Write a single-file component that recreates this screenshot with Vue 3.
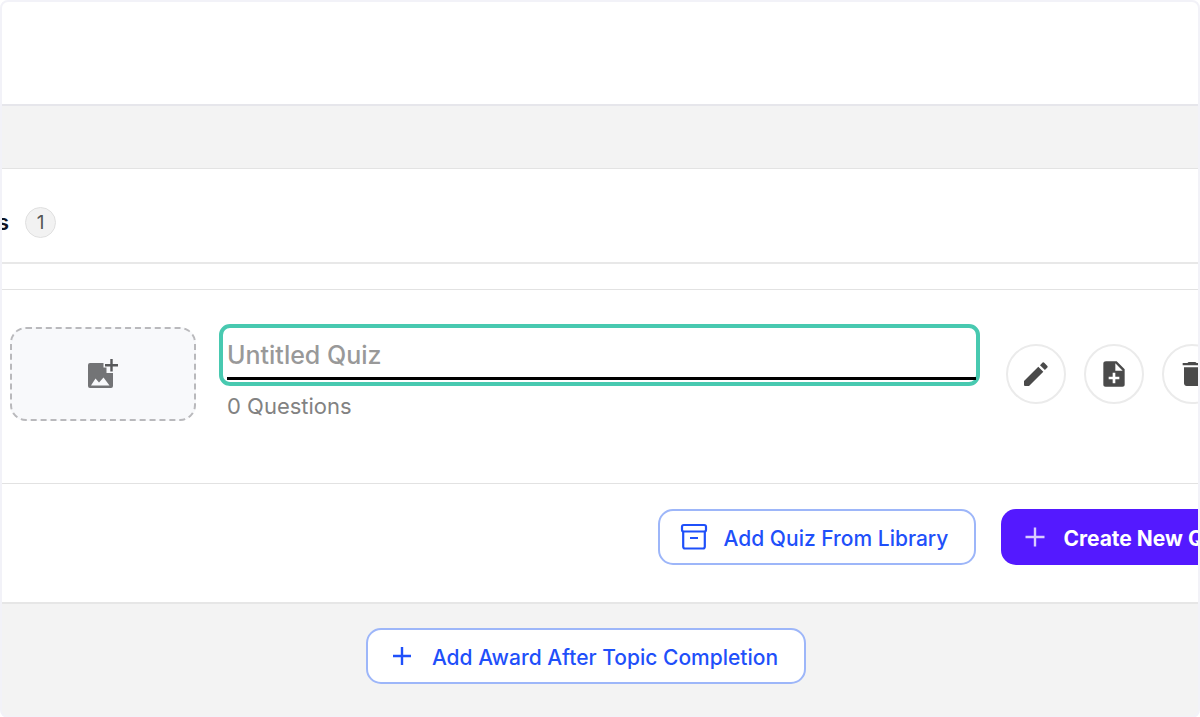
<script setup>
import { ref } from 'vue'

const title = ref('')
const quizCount = ref(1)
const questionCount = ref(0)
</script>

<template>
  <main class="frame">
    <div class="topbar"></div>

    <section class="panel">
      <header class="panel-head">
        <h2 class="heading">s</h2>
        <span class="count">{{ quizCount }}</span>
      </header>
      <div class="strip"></div>

      <div class="quiz">
        <button class="cover" type="button" aria-label="Add image">
          <svg width="30" height="30" viewBox="0 0 30 30">
            <path fill="#737476" d="M2 4H15.500V8.500H18.500V14H25V27Q25 29 23 29H2Q0 29 0 27V6Q0 4 2 4Z" />
            <path fill="#f8f9fb" d="M3 26.500L7.500 19.500L11 23.500L15.500 18.500L21.500 26.500Z" />
            <path fill="none" stroke="#58595b" stroke-width="2.400" d="M23.500 0V12.500M17 6.200H30" />
          </svg>
        </button>

        <div class="details">
          <div class="title-box">
            <input v-model="title" class="title" type="text" placeholder="Untitled Quiz" aria-label="Quiz title" />
          </div>
          <p class="questions">{{ questionCount }} Questions</p>
        </div>

        <div class="actions">
          <button class="round" type="button" aria-label="Edit">
            <svg width="24" height="24" viewBox="0 0 24 24">
              <path d="M1 24Q0 24 0 23V19L14.300 4.800L19.300 9.800L5 24ZM16 3.200L18.600 0.600Q19.400 0 20.200 0.700L23.400 3.900Q24 4.700 23.400 5.500L20.900 8.100Z" />
            </svg>
          </button>
          <button class="round" type="button" aria-label="Add page">
            <svg width="32" height="32" viewBox="0 0 24 24">
              <path fill-rule="evenodd" d="M14 2.500H6C4.900 2.500 4 3.100 4 4.200V19.800C4 20.900 4.600 21.500 5.700 21.500H18.300C19.400 21.500 20 20.900 20 19.800V8.500ZM16 16H13V19H11V16H8V14H11V11H13V14H16ZM13 9.500V4L18.500 9.500Z" />
            </svg>
          </button>
          <button class="round" type="button" aria-label="Delete">
            <svg width="32" height="32" viewBox="0 0 24 24">
              <path d="M6 19C6 20.100 6.900 21 8 21H16C17.100 21 18 20.100 18 19V7H6ZM19 3.800H15.500L14.500 3H9.500L8.500 3.800H5V5.500H19Z" />
            </svg>
          </button>
        </div>
      </div>

      <footer class="panel-foot">
        <button class="btn outline library" type="button">
          <svg width="28" height="28" viewBox="0 0 28 28" fill="none" stroke="currentColor" stroke-width="2.200">
            <rect x="2" y="2" width="24" height="6.500" rx="1.800" />
            <path d="M3.200 8.500V23.500Q3.200 25.500 5 25.500H23Q24.800 25.500 24.800 23.500V8.500M10 15H18" />
          </svg>
          <span>Add Quiz From Library</span>
        </button>
        <button class="btn primary" type="button">
          <svg width="20" height="20" viewBox="0 0 20 20" fill="none" stroke="#d9ccff" stroke-width="2.400">
            <path d="M10 0.500V19.500M0.500 10H19.500" />
          </svg>
          <span>Create New Quiz</span>
        </button>
      </footer>
    </section>

    <div class="award">
      <button class="btn outline" type="button">
        <svg width="20" height="20" viewBox="0 0 20 20" fill="none" stroke="currentColor" stroke-width="2.400">
          <path d="M10 1V19M1 10H19" />
        </svg>
        <span>Add Award After Topic Completion</span>
      </button>
    </div>
  </main>
</template>

<style>
body {
  background: #ffffff;
}
</style>

<style scoped>
.frame,
.frame * {
  box-sizing: border-box;
}
.frame {
  min-height: 100vh;
  overflow: hidden;
  border: 2px solid #f2f2f8;
  border-radius: 8px;
  background: #f3f3f3;
  font-family: Inter, "Liberation Sans", sans-serif;
}
button {
  font: inherit;
  padding: 0;
  cursor: pointer;
}
svg {
  display: block;
  flex: none;
}
.topbar {
  height: 104px;
  background: #ffffff;
  border-bottom: 2px solid #e6e6eb;
}
.panel {
  margin-top: 62px;
  background: #ffffff;
  border-top: 1px solid #e3e3e3;
  border-bottom: 2px solid #e6e6e6;
}
.panel-head {
  display: flex;
  align-items: center;
  gap: 16px;
  height: 95px;
  padding-top: 13px;
  border-bottom: 2px solid #e8e8e8;
}
.heading {
  display: flex;
  justify-content: flex-end;
  width: 7px;
  margin: 0;
  overflow: hidden;
  color: #101522;
  font-size: 22px;
  font-weight: 600;
  line-height: 28px;
}
.count {
  display: grid;
  place-items: center;
  width: 31px;
  height: 31px;
  border: 1px solid #e0e0e0;
  border-radius: 50%;
  background: #f2f2f2;
  color: #555555;
  font-size: 19px;
}
.strip {
  height: 26px;
  border-bottom: 1px solid #e2e2e2;
}
.quiz {
  display: flex;
  align-items: flex-start;
  height: 194px;
  padding: 34px 0 0 8px;
  border-bottom: 1px solid #e2e2e2;
}
.cover {
  display: grid;
  place-items: center;
  flex: none;
  width: 186px;
  height: 94px;
  margin: 3px 23px 0 0;
  border: 2px dashed #b9b9bc;
  border-radius: 16px;
  background: #f8f9fb;
}
.details {
  flex: 1;
  min-width: 0;
}
.title-box {
  height: 62px;
  padding: 4px 0 1px 4px;
  border: 4px solid #48c9b0;
  border-radius: 11px;
}
.title {
  display: block;
  width: 100%;
  height: 48px;
  padding: 0;
  border: 0;
  border-bottom: 3px solid #000000;
  border-radius: 0;
  outline: 0;
  background: transparent;
  color: #222222;
  font-family: inherit;
  font-size: 25px;
  font-weight: 500;
}
.title::placeholder {
  color: #999999;
  opacity: 1;
}
.questions {
  margin: 6px 0 0 8px;
  color: #828282;
  font-size: 22px;
  line-height: 28px;
}
.actions {
  display: flex;
  gap: 18px;
  flex: none;
  margin: 20px -24px 0 26px;
}
.round {
  display: grid;
  place-items: center;
  width: 60px;
  height: 60px;
  border: 2px solid #ebebeb;
  border-radius: 50%;
  background: #ffffff;
}
.round svg {
  fill: #4a4a4a;
}
.panel-foot {
  display: flex;
  justify-content: flex-end;
  gap: 25px;
  height: 118px;
  padding-top: 25px;
  margin-right: -61px;
}
.btn {
  display: flex;
  align-items: center;
  flex: none;
  height: 56px;
  padding: 0 26px 0 24px;
  gap: 20px;
  border: 2px solid transparent;
  border-radius: 15px;
  font-size: 21px;
  font-weight: 500;
  white-space: nowrap;
}
.btn span {
  padding-top: 2px;
}
.outline {
  border-color: #9db6f9;
  background: #ffffff;
  color: #1f50fa;
}
.library {
  padding: 0 26px 0 20px;
  gap: 16px;
}
.primary {
  padding: 0 24px;
  gap: 18px;
  border: 0;
  background: #5419ff;
  color: #ffffff;
  font-weight: 700;
}
.award {
  display: flex;
  justify-content: center;
  padding: 24px 28px 32px 0;
}
</style>
